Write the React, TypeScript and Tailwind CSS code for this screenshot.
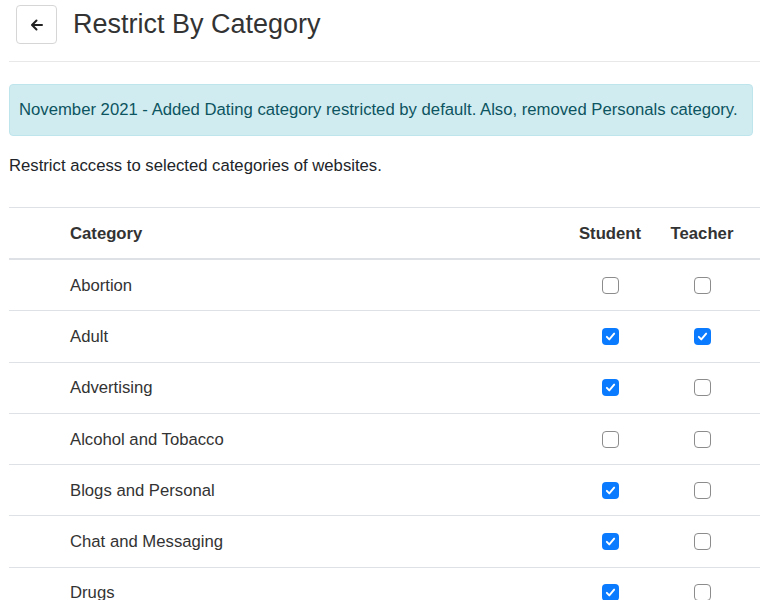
const rows: [string, boolean, boolean][] = [
  ['Abortion', false, false],
  ['Adult', true, true],
  ['Advertising', true, false],
  ['Alcohol and Tobacco', false, false],
  ['Blogs and Personal', true, false],
  ['Chat and Messaging', true, false],
  ['Drugs', true, false],
  ['Gambling', true, false],
]

function Check({ on }: { on: boolean }) {
  if (on)
    return (
      <span className="flex h-[17px] w-[17px] items-center justify-center rounded-[4px] bg-[#0a7bff]">
        <svg viewBox="0 0 16 16" className="h-[13px] w-[13px]" fill="none" stroke="white" strokeWidth="2.4" strokeLinecap="round" strokeLinejoin="round">
          <path d="M3.5 8.5l3 3 6-7" />
        </svg>
      </span>
    )
  return <span className="block h-[17px] w-[17px] rounded-[4px] border-[1.5px] border-[#8c8c8c] bg-white" />
}

export default function App() {
  return (
    <div className="min-h-screen overflow-hidden bg-white pl-[9px] text-[#212529]" style={{ fontFamily: '"Liberation Sans", Arial, sans-serif' }}>
      {/* header */}
      <div className="flex items-center gap-4 pt-[5px] pl-[7px]">
        <button className="flex h-[39px] w-[41px] items-center justify-center rounded-[4px] border border-[#d6d6d6] bg-white">
          <svg viewBox="0 0 16 16" className="h-4 w-4" fill="none" stroke="#222" strokeWidth="2" strokeLinecap="round" strokeLinejoin="round">
            <path d="M13 8H3.5M7.5 3.5L3 8l4.5 4.5" />
          </svg>
        </button>
        <h1 className="text-[27px] leading-none text-[#333]">Restrict By Category</h1>
      </div>
      <div className="mt-[17px] h-px bg-[#e8e8e8]" />

      {/* alert */}
      <div className="mt-[22px] mr-[7px] flex h-[52px] items-center rounded-[4px] border border-[#bee5eb] bg-[#d1ecf1] px-[9px] text-[16.7px] text-[#0c5460]">
        November 2021 - Added Dating category restricted by default. Also, removed Personals category.
      </div>

      <p className="mt-[18px] text-[16.7px] leading-6">Restrict access to selected categories of websites.</p>

      {/* table */}
      <div className="mt-[29px] border-t border-[#dee2e6] text-[16.7px]">
        <div className="flex h-[52px] items-center border-b-2 border-[#dee2e6] pt-px font-bold text-[#333]">
          <div className="flex-1 pl-[61px]">Category</div>
          <div className="w-[92px] text-center">Student</div>
          <div className="w-[92px] text-center">Teacher</div>
          <div className="w-[12px]" />
        </div>
        {rows.map(([name, s, t]) => (
          <div key={name} className="flex h-[51.3px] items-center border-b border-[#dee2e6] text-[#333]">
            <div className="flex-1 pl-[61px]">{name}</div>
            <div className="flex w-[92px] justify-center">
              <Check on={s} />
            </div>
            <div className="flex w-[92px] justify-center">
              <Check on={t} />
            </div>
            <div className="w-[12px]" />
          </div>
        ))}
      </div>
    </div>
  )
}
